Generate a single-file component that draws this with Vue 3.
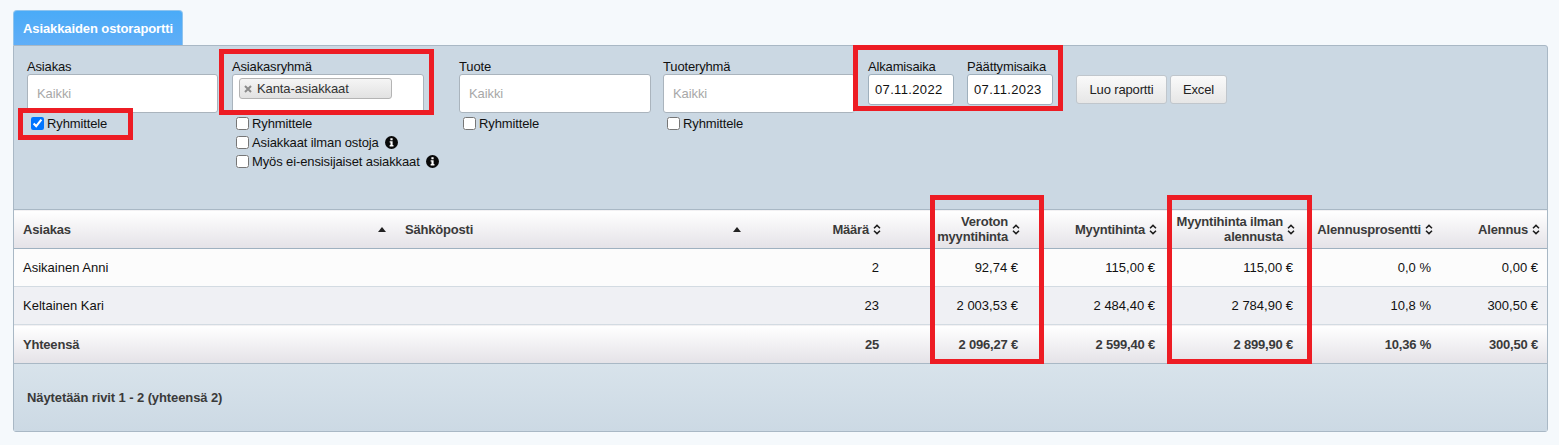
<script setup>
const columns = [
  { label: 'Asiakas', cls: 'left', sort: 'up' },
  { label: 'Sähköposti', cls: 'left', sort: 'up' },
  { label: 'Määrä', sort: 'both' },
  { label: ['Veroton', 'myyntihinta'], sort: 'both' },
  { label: 'Myyntihinta', sort: 'both' },
  { label: ['Myyntihinta ilman', 'alennusta'], sort: 'both' },
  { label: 'Alennusprosentti', sort: 'both' },
  { label: 'Alennus', sort: 'both' }
]
const widths = [382, 349, 143, 139, 137, 138, 138, 107]
const rows = [
  ['Asikainen Anni', '', '2', '92,74 €', '115,00 €', '115,00 €', '0,0 %', '0,00 €'],
  ['Keltainen Kari', '', '23', '2 003,53 €', '2 484,40 €', '2 784,90 €', '10,8 %', '300,50 €']
]
const total = ['Yhteensä', '', '25', '2 096,27 €', '2 599,40 €', '2 899,90 €', '10,36 %', '300,50 €']
</script>

<template>
  <div class="page">
    <div class="tab">Asiakkaiden ostoraportti</div>
    <section class="panel">
      <form class="filters" @submit.prevent>
        <div class="field f-customer">
          <label class="lbl">Asiakas</label>
          <div class="select"><span class="ph">Kaikki</span></div>
          <label class="chk"><input type="checkbox" checked />Ryhmittele</label>
        </div>
        <div class="field f-group">
          <label class="lbl">Asiakasryhmä</label>
          <div class="select tagged">
            <span class="tag">
              <svg class="x" viewBox="0 0 8 8" width="8" height="8"><path d="M1 1l6 6M7 1 1 7" stroke="#8c8c8c" stroke-width="2" fill="none" /></svg>
              Kanta-asiakkaat
            </span>
          </div>
          <label class="chk"><input type="checkbox" />Ryhmittele</label>
          <label class="chk"><input type="checkbox" />Asiakkaat ilman ostoja
            <svg class="info" viewBox="0 0 14 14" width="13" height="13"><circle cx="7" cy="7" r="7" fill="#0a0a0a" /><rect x="5.8" y="2.4" width="2.4" height="2.2" fill="#fff" /><path d="M5 5.6h3.2v4.2h.9v1.5H5V9.8h.9V7.1H5z" fill="#fff" /></svg>
          </label>
          <label class="chk"><input type="checkbox" />Myös ei-ensisijaiset asiakkaat
            <svg class="info" viewBox="0 0 14 14" width="13" height="13"><circle cx="7" cy="7" r="7" fill="#0a0a0a" /><rect x="5.8" y="2.4" width="2.4" height="2.2" fill="#fff" /><path d="M5 5.6h3.2v4.2h.9v1.5H5V9.8h.9V7.1H5z" fill="#fff" /></svg>
          </label>
        </div>
        <div class="field f-product">
          <label class="lbl">Tuote</label>
          <div class="select"><span class="ph">Kaikki</span></div>
          <label class="chk"><input type="checkbox" />Ryhmittele</label>
        </div>
        <div class="field f-pgroup">
          <label class="lbl">Tuoteryhmä</label>
          <div class="select"><span class="ph">Kaikki</span></div>
          <label class="chk"><input type="checkbox" />Ryhmittele</label>
        </div>
        <div class="field f-date">
          <label class="lbl">Alkamisaika</label>
          <div class="date">07.11.2022</div>
        </div>
        <div class="field f-date2">
          <label class="lbl">Päättymisaika</label>
          <div class="date">07.11.2023</div>
        </div>
        <div class="buttons">
          <button class="btn b1">Luo raportti</button>
          <button class="btn b2">Excel</button>
        </div>
      </form>

      <table class="grid">
        <colgroup><col v-for="(w, i) in widths" :key="i" :style="{ width: w + 'px' }" /></colgroup>
        <thead>
          <tr>
            <th v-for="(c, i) in columns" :key="i" :class="c.cls">
              <div class="th">
                <span class="th-text">
                  <template v-if="Array.isArray(c.label)">{{ c.label[0] }}<br />{{ c.label[1] }}</template>
                  <template v-else>{{ c.label }}</template>
                </span>
                <svg v-if="c.sort === 'both'" class="sort" viewBox="0 0 8 11" width="8" height="11">
                  <path d="M1 4.2 4 1.4 7 4.2M1 6.8l3 2.8 3-2.8" fill="none" stroke="#1c1c1c" stroke-width="1.5" />
                </svg>
                <svg v-else class="sort-up" viewBox="0 0 8 5" width="8" height="5"><path d="M0 5 4 0l4 5z" fill="#222" /></svg>
              </div>
            </th>
          </tr>
        </thead>
        <tbody>
          <tr v-for="(r, ri) in rows" :key="ri" :class="ri % 2 ? 'even' : 'odd'">
            <td v-for="(v, i) in r" :key="i" :class="i < 2 ? 'left' : ''">{{ v }}</td>
          </tr>
        </tbody>
        <tfoot>
          <tr>
            <td v-for="(v, i) in total" :key="i" :class="i < 2 ? 'left' : ''">{{ v }}</td>
          </tr>
        </tfoot>
      </table>
      <div class="pager">Näytetään rivit 1 - 2 (yhteensä 2)</div>
    </section>

    <div class="mark m1"></div>
    <div class="mark m2"></div>
    <div class="mark m3"></div>
    <div class="mark m4"></div>
    <div class="mark m5"></div>
  </div>
</template>

<style>
html, body { margin: 0; background: #f5f9fc; }
</style>

<style scoped>
.page {
  position: relative;
  width: 1559px;
  height: 445px;
  padding: 10px 11px 0 13px;
  box-sizing: border-box;
  font-family: "Liberation Sans", Arial, sans-serif;
  font-size: 13px;
  color: #111;
  overflow: hidden;
}
.tab {
  width: 170px;
  height: 35px;
  box-sizing: border-box;
  padding-left: 9px;
  line-height: 36px;
  font-size: 13px;
  letter-spacing: -0.1px;
  font-weight: bold;
  color: #fff;
  background: linear-gradient(#4aabf7, #60aef7);
  border: 1px solid #8fc4ee;
  border-bottom: 0;
  border-radius: 4px 4px 0 0;
}
.panel {
  background: #cbd8e3;
  border: 1px solid #a9b8c5;
  border-radius: 0 3px 3px 3px;
  height: 387px;
  box-sizing: border-box;
  display: flex;
  flex-direction: column;
}
.filters {
  height: 163px;
  box-sizing: border-box;
  display: flex;
  align-items: flex-start;
  padding: 13px 0 0 13px;
  flex: none;
}
.field { display: flex; flex-direction: column; flex: none; }
.f-customer { width: 191px; margin-right: 14px; }
.f-group { width: 192px; margin-right: 35px; }
.f-product { width: 192px; margin-right: 12px; }
.f-pgroup { width: 192px; margin-right: 13px; }
.f-date { width: 86px; margin-right: 13px; }
.f-date2 { width: 86px; margin-right: 23px; }
.lbl { height: 15px; line-height: 16px; letter-spacing: -0.15px; color: #111; white-space: nowrap; }
.select {
  height: 39px;
  margin-bottom: 1px;
  box-sizing: border-box;
  background: #fff;
  border: 1px solid #aab4bd;
  border-radius: 3px;
  padding: 0 9px;
  line-height: 37px;
}
.ph { color: #a8a8a8; letter-spacing: -0.1px; }
.select.tagged { padding: 3px 6px; line-height: normal; }
.tag {
  display: flex;
  align-items: center;
  width: 153px;
  height: 21px;
  box-sizing: border-box;
  border: 1px solid #b4b4b4;
  border-radius: 3px;
  background: linear-gradient(#f5f5f5, #e2e2e2);
  color: #333;
  padding-left: 4px;
  letter-spacing: -0.1px;
}
.x { margin-right: 5px; flex: none; }
.chk {
  display: flex;
  align-items: center;
  height: 19px;
  color: #111;
  white-space: nowrap;
  padding-left: 4px;
  letter-spacing: -0.12px;
}
.chk input { margin: 0 3px 0 0; width: 13px; height: 13px; flex: none; }
.info { margin-left: 6px; flex: none; }
.date {
  height: 31px;
  box-sizing: border-box;
  background: #fff;
  border: 1px solid #9fb0bd;
  border-radius: 3px;
  padding-left: 6px;
  line-height: 29px;
  letter-spacing: 0.35px;
}
.buttons { display: flex; gap: 3px; margin-top: 16px; }
.btn {
  height: 29px;
  box-sizing: border-box;
  font: 13px "Liberation Sans", Arial, sans-serif;
  letter-spacing: -0.15px;
  color: #222;
  border: 1px solid #c0c6cc;
  border-radius: 3px;
  background: linear-gradient(#fafafa, #e6e6e6);
  padding: 0;
}
.b1 { width: 91px; }
.b2 { width: 57px; }
.grid {
  table-layout: fixed;
  width: 1533px;
  border-collapse: collapse;
  flex: none;
}
th, tfoot td {
  background: linear-gradient(#ffffff, #e4e2e7);
  font-weight: bold;
  color: #3a3a3a;
  letter-spacing: -0.2px;
}
th {
  height: 39px;
  padding: 0 7px 0 9px;
  border-top: 1px solid #a9b8c5;
  border-bottom: 1px solid #9fb1c0;
  text-align: right;
  box-sizing: border-box;
}
.th { display: flex; align-items: center; justify-content: flex-end; gap: 4px; line-height: 15px; }
th.left .th { justify-content: space-between; }
th.left { text-align: left; padding-right: 10px; }
th.left:nth-child(2) { padding-right: 4px; }
.sort { flex: none; }
.sort-up { flex: none; }
td {
  height: 38px;
  padding: 0 9px;
  text-align: right;
  box-sizing: border-box;
  border-bottom: 1px solid #d3dbe2;
}
td.left { text-align: left; }
.odd td { background: #fcfcfc; color: #111; }
.even td { background: #eff0f4; color: #111; }
tfoot td { height: 39px; border-bottom: 1px solid #a9b8c5; }
.pager {
  flex: 1;
  display: flex;
  align-items: center;
  padding-left: 13px;
  font-weight: bold;
  letter-spacing: -0.1px;
  color: #3a3a3a;
  background: linear-gradient(#d8e3eb, #ccd9e4);
}
.mark {
  position: absolute;
  border: 5px solid #ed1c24;
  box-sizing: border-box;
  pointer-events: none;
}
.m1 { left: 18px; top: 108px; width: 115px; height: 32px; }
.m2 { left: 219px; top: 49px; width: 215px; height: 66px; }
.m3 { left: 853px; top: 45px; width: 210px; height: 66px; }
.m4 { left: 930px; top: 195px; width: 114px; height: 169px; }
.m5 { left: 1167px; top: 195px; width: 145px; height: 169px; }
</style>
